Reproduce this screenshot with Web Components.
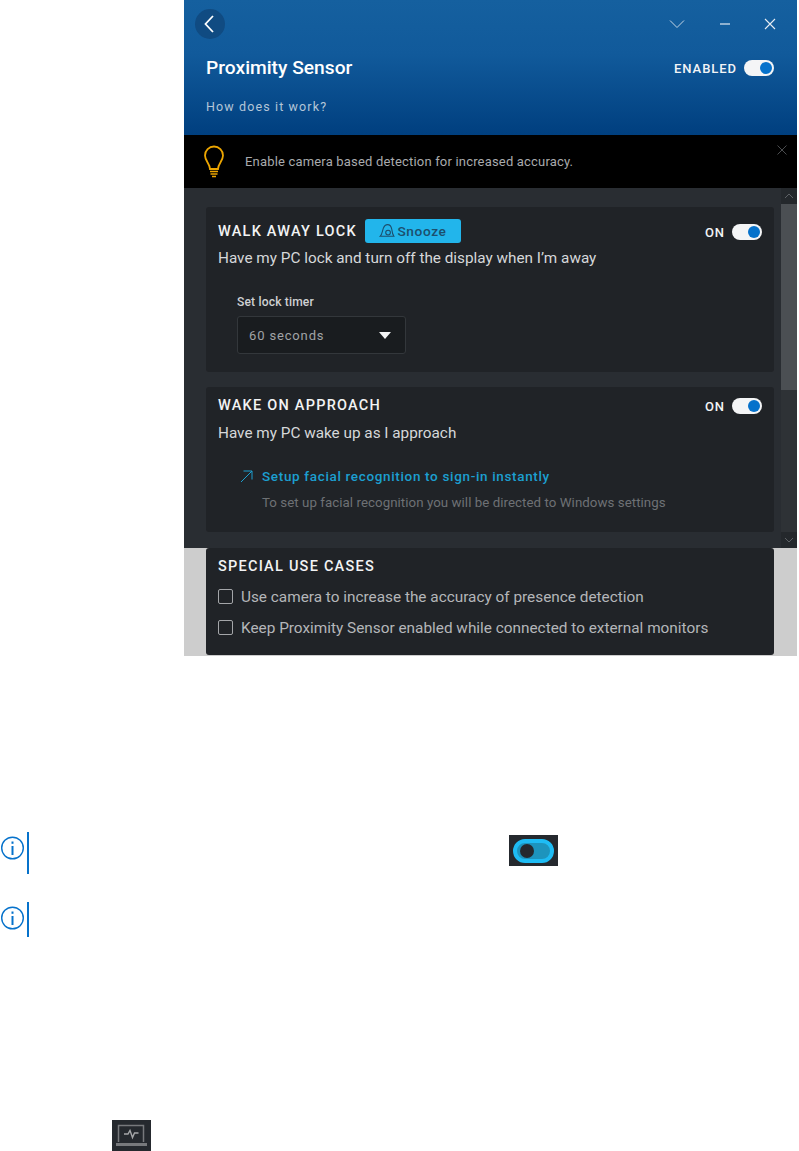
<!DOCTYPE html>
<html>
<head>
<meta charset="utf-8">
<title>Proximity Sensor</title>
<style>
  html, body { margin: 0; padding: 0; background: #fff; }
  body { font-family: Roboto, "Liberation Sans", sans-serif; }
</style>
</head>
<body>
<doc-page></doc-page>

<script>
class OnToggle extends HTMLElement {
  constructor() {
    super();
    const root = this.attachShadow({ mode: 'open' });
    root.innerHTML = `
      <style>
        :host { display: inline-flex; align-items: center; gap: 7px; color: #f2f4f6; font-size: 13px; font-weight: 500; letter-spacing: .95px; }
        .track { width: 30px; height: 16px; border-radius: 8px; background: #f4f5f6; position: relative; box-sizing: border-box; }
        .knob { position: absolute; right: 2px; top: 2px; width: 12px; height: 12px; border-radius: 50%; background: #0672cb; }
      </style>
      <slot></slot><span class="track"><span class="knob"></span></span>`;
  }
}

class AppHeader extends HTMLElement {
  constructor() {
    super();
    const root = this.attachShadow({ mode: 'open' });
    root.innerHTML = `
      <style>
        :host { display: block; height: 135px; box-sizing: border-box; padding: 9px 21px 0 11px; color: #fff;
          background: linear-gradient(#15609f 0%, #115a9b 40%, #003f7f 100%); }
        .top { display: flex; align-items: center; height: 30px; }
        .back { width: 30px; height: 30px; border-radius: 50%; background: #104b82; display: flex; align-items: center; justify-content: center; }
        .back svg { margin-left: -2px; }
        .ctrl { margin-left: auto; display: flex; align-items: center; gap: 33.5px; }
        .ctrl svg { display: block; }
        .title { display: flex; align-items: center; justify-content: space-between; margin: 16px 2px 0 11px; height: 26px; }
        h1 { margin: -2px 0 0; font-size: 19.2px; font-weight: 500; letter-spacing: 0; }
        .how { margin: 18px 0 0 11px; font-size: 12.5px; letter-spacing: 1.12px; color: #b4c6d8; font-weight: 400; line-height: 16px; }
      </style>
      <div class="top">
        <span class="back"><svg width="12" height="18" viewBox="0 0 12 18" fill="none" stroke="#fff" stroke-width="1.8"><path d="M10 1 L2.5 9 L10 17"/></svg></span>
        <span class="ctrl">
          <svg width="16" height="10" viewBox="0 0 16 10" fill="none" stroke="#c5d5e5" stroke-width="1"><path d="M1 1.5 L8 8.5 L15 1.5"/></svg>
          <svg width="12" height="10" viewBox="0 0 12 10" fill="none" stroke="#c5d5e5" stroke-width="1.4"><path d="M1 5 H11"/></svg>
          <svg width="12" height="12" viewBox="0 0 12 12" fill="none" stroke="#e6edf4" stroke-width="1.1"><path d="M1 1 L11 11 M11 1 L1 11"/></svg>
        </span>
      </div>
      <div class="title"><h1>Proximity Sensor</h1><on-toggle>ENABLED</on-toggle></div>
      <div class="how">How does it work?</div>`;
  }
}

class HintBanner extends HTMLElement {
  constructor() {
    super();
    const root = this.attachShadow({ mode: 'open' });
    root.innerHTML = `
      <style>
        :host { display: flex; align-items: center; height: 53px; background: #000; color: #a9abad; font-size: 13px; position: relative; padding-left: 19px; letter-spacing: .18px; }
        svg.bulb { margin-right: 20px; display: block; }
        .close { position: absolute; right: 10px; top: 10px; }
      </style>
      <svg class="bulb" width="22" height="34" viewBox="0 0 22 34" fill="none" stroke="#eda600" stroke-width="1.8">
        <path d="M7 24 C7 19 2 16 2 10.5 A9 9 0 0 1 20 10.5 C20 16 15 19 15 24 Z"/>
        <path d="M7 26.5 H15 M7.5 29 H14.5 M9 31.5 H13" stroke-width="1.6"/>
      </svg>
      <span>Enable camera based detection for increased accuracy.</span>
      <svg class="close" width="10" height="10" viewBox="0 0 10 10" fill="none" stroke="#4b4d4f" stroke-width="1"><path d="M.5 .5 L9.5 9.5 M9.5 .5 L.5 9.5"/></svg>`;
  }
}

class FeatureCard extends HTMLElement {
  constructor() {
    super();
    const root = this.attachShadow({ mode: 'open' });
    root.innerHTML = `
      <style>
        :host { display: block; box-sizing: border-box; background: #202327; border-radius: 3px; padding: 12px 12px 0 12px; color: #e4e6e8; }
        .head { display: flex; align-items: center; height: 24px; }
        h2 { margin: 0; font-size: 14.5px; font-weight: 500; letter-spacing: 1.24px; color: #f2f3f4; }
        .right { margin-left: auto; }
        .desc { font-size: 15.3px; line-height: 20px; margin-top: var(--desc-gap, 5px); color: #d6d8da; }
      </style>
      <div class="head"><h2><slot name="title"></slot></h2><slot name="badge"></slot><span class="right"><slot name="toggle"></slot></span></div>
      <div class="desc"><slot name="desc"></slot></div>
      <slot></slot>`;
  }
}

class SnoozeBadge extends HTMLElement {
  constructor() {
    super();
    const root = this.attachShadow({ mode: 'open' });
    root.innerHTML = `
      <style>
        :host { display: inline-flex; align-items: center; justify-content: center; gap: 2px; width: 96px; height: 24px; margin-left: 8px; border-radius: 3px; background: #22b5eb; color: #1c4f6d; font-size: 13.7px; font-weight: 500; letter-spacing: .6px; }
      </style>
      <svg width="16" height="16" viewBox="0 0 15 15" fill="none" stroke="#1c4f6d" stroke-width="1"><path d="M1 12.5 C3 11 3 8 4 5 C5 2.5 6.5 1.5 8 1.5 C10 1.5 11.5 3 12 6 C12.3 9 13 11 14 12.5 Z"/><circle cx="8.5" cy="9" r="2.2"/></svg>
      <slot></slot>`;
  }
}

class TimerSelect extends HTMLElement {
  constructor() {
    super();
    const root = this.attachShadow({ mode: 'open' });
    root.innerHTML = `
      <style>
        :host { display: block; margin: 26px 0 0 19px; }
        label { display: block; font-size: 12.1px; font-weight: 500; color: #cfd1d3; line-height: 16px; letter-spacing: .15px; }
        .box { box-sizing: border-box; width: 169px; height: 38px; margin-top: 6px; padding: 0 14px 0 11px; display: flex; align-items: center; justify-content: space-between; background: #191c1f; border: 1px solid #33373b; border-radius: 3px; color: #a0a3a6; font-size: 13px; letter-spacing: .85px; }
      </style>
      <label>Set lock timer</label>
      <div class="box"><slot></slot>
        <svg width="12" height="7" viewBox="0 0 12 7"><path d="M0 0 H12 L6 7 Z" fill="#f2f3f4"/></svg>
      </div>`;
  }
}

class SetupLink extends HTMLElement {
  constructor() {
    super();
    const root = this.attachShadow({ mode: 'open' });
    root.innerHTML = `
      <style>
        :host { display: block; margin: 24px 0 0 22px; }
        .link { display: flex; align-items: center; gap: 9px; color: #1c9fd0; font-size: 13.5px; font-weight: 500; letter-spacing: .66px; line-height: 18px; }
        .sub { margin: 9px 0 0 22px; font-size: 13.3px; line-height: 18px; color: #6e7175; letter-spacing: .05px; }
      </style>
      <div class="link">
        <svg width="13" height="13" viewBox="0 0 13 13" fill="none" stroke="#1c9fd0" stroke-width="1"><path d="M1 12 L12 1 M3.5 1 H12 V9.5"/></svg>
        <slot></slot>
      </div>
      <div class="sub"><slot name="sub"></slot></div>`;
  }
}

class CheckRow extends HTMLElement {
  constructor() {
    super();
    const root = this.attachShadow({ mode: 'open' });
    root.innerHTML = `
      <style>
        :host { display: flex; align-items: center; gap: 8px; height: 31px; font-size: 15.35px; color: #b4b6b9; }
        .box { width: 13px; height: 13px; border: 1px solid #a4a6a9; border-radius: 2px; flex: none; }
      </style>
      <span class="box"></span><slot></slot>`;
  }
}

class ScrollBar extends HTMLElement {
  constructor() {
    super();
    const root = this.attachShadow({ mode: 'open' });
    root.innerHTML = `
      <style>
        :host { display: flex; flex-direction: column; width: 16px; height: 100%; background: #2e3236; flex: none; }
        .arrow { height: 16px; display: flex; align-items: center; justify-content: center; background: #24282c; }
        .thumb { height: 186px; background: #4b4f53; }
        .rest { flex: 1; }
      </style>
      <span class="arrow"><svg width="10" height="6" viewBox="0 0 10 6" fill="none" stroke="#5d6165"><path d="M1 5 L5 1 L9 5"/></svg></span>
      <span class="thumb"></span><span class="rest"></span>
      <span class="arrow"><svg width="10" height="6" viewBox="0 0 10 6" fill="none" stroke="#5d6165"><path d="M1 1 L5 5 L9 1"/></svg></span>`;
  }
}

class AppWindow extends HTMLElement {
  constructor() {
    super();
    const root = this.attachShadow({ mode: 'open' });
    root.innerHTML = `
      <style>
        :host { display: block; margin-left: 184px; width: 613px; background: #cdcdcd; }
        .pane { display: flex; height: 360px; background: #292d32; }
        .cards { flex: 1; padding: 19px 7px 0 22px; display: flex; flex-direction: column; gap: 15px; min-width: 0; }
        feature-card.one { height: 165px; }
        feature-card.two { height: 145px; padding-top: 6px; --desc-gap: 6px; }
        .under { padding: 0 23px 1px 22px; }
        feature-card.three { height: 107px; padding-top: 6px; --desc-gap: 3px; }
      </style>
      <app-header></app-header>
      <hint-banner></hint-banner>
      <div class="pane">
        <div class="cards">
          <feature-card class="one">
            <span slot="title">WALK AWAY LOCK</span>
            <snooze-badge slot="badge">Snooze</snooze-badge>
            <on-toggle slot="toggle">ON</on-toggle>
            <span slot="desc">Have my PC lock and turn off the display when I’m away</span>
            <timer-select>60 seconds</timer-select>
          </feature-card>
          <feature-card class="two">
            <span slot="title">WAKE ON APPROACH</span>
            <on-toggle slot="toggle">ON</on-toggle>
            <span slot="desc">Have my PC wake up as I approach</span>
            <setup-link>Setup facial recognition to sign-in instantly<span slot="sub">To set up facial recognition you will be directed to Windows settings</span></setup-link>
          </feature-card>
        </div>
        <scroll-bar></scroll-bar>
      </div>
      <div class="under">
        <feature-card class="three">
          <span slot="title">SPECIAL USE CASES</span>
          <div class="rows">
            <check-row>Use camera to increase the accuracy of presence detection</check-row>
            <check-row>Keep Proximity Sensor enabled while connected to external monitors</check-row>
          </div>
        </feature-card>
      </div>`;
  }
}

class NoteRow extends HTMLElement {
  constructor() {
    super();
    const root = this.attachShadow({ mode: 'open' });
    root.innerHTML = `
      <style>
        :host { display: flex; align-items: flex-start; }
        svg { display: block; margin: 4px 0 0 1px; flex: none; }
        .bar { width: 2px; margin-left: 3px; background: #0672cb; height: var(--bar, 42px); }
        .content { flex: 1; position: relative; }
      </style>
      <svg width="23" height="24" viewBox="0 0 23 24" fill="none" stroke="#0672cb">
        <circle cx="11.5" cy="12" r="10.8" stroke-width="1.4"/>
        <path d="M11.5 10 V19" stroke-width="2"/>
        <path d="M11.5 5.5 V7.8" stroke-width="2"/>
      </svg>
      <span class="bar"></span>
      <span class="content"><slot></slot></span>`;
  }
}

class DocPage extends HTMLElement {
  constructor() {
    super();
    const root = this.attachShadow({ mode: 'open' });
    root.innerHTML = `
      <style>
        :host { display: block; height: 1151px; overflow: hidden; box-sizing: border-box; }
        note-row.a { margin-top: 176px; --bar: 42px; }
        note-row.b { margin-top: 28px; --bar: 35px; }
        .toggle-shot { display: flex; align-items: center; justify-content: center; width: 49px; height: 31px; background: #25292e; margin: 3px 0 0 480px; }
        .pill { width: 41px; height: 24px; box-sizing: border-box; border: 4px solid #1ebcf4; border-radius: 12px; background: #1d94bd; position: relative; }
        .pill i { position: absolute; left: 3px; top: 1px; width: 14px; height: 14px; border-radius: 50%; background: #25292e; }
        .laptop { margin: 183px 0 0 112px; width: 39px; height: 31px; background: #25292e; display: flex; align-items: center; justify-content: center; }
      </style>
      <app-window></app-window>
      <note-row class="a"><span class="toggle-shot"><span class="pill"><i></i></span></span></note-row>
      <note-row class="b"></note-row>
      <div class="laptop">
        <svg width="33" height="27" viewBox="0 0 33 27" fill="none" stroke="#77797c" stroke-width="1.5">
          <path d="M3.5 20 V3.5 H28.5 V20"/>
          <path d="M1 22.5 H32" stroke-width="3"/>
          <path d="M9 12 H13 L15 8.5 L17.5 15.5 L19.5 11 H23.5" stroke="#a5a7a9" stroke-width="1.4"/>
        </svg>
      </div>`;
  }
}

customElements.define('on-toggle', OnToggle);
customElements.define('app-header', AppHeader);
customElements.define('hint-banner', HintBanner);
customElements.define('feature-card', FeatureCard);
customElements.define('snooze-badge', SnoozeBadge);
customElements.define('timer-select', TimerSelect);
customElements.define('setup-link', SetupLink);
customElements.define('check-row', CheckRow);
customElements.define('scroll-bar', ScrollBar);
customElements.define('app-window', AppWindow);
customElements.define('note-row', NoteRow);
customElements.define('doc-page', DocPage);
</script>
</body>
</html>
